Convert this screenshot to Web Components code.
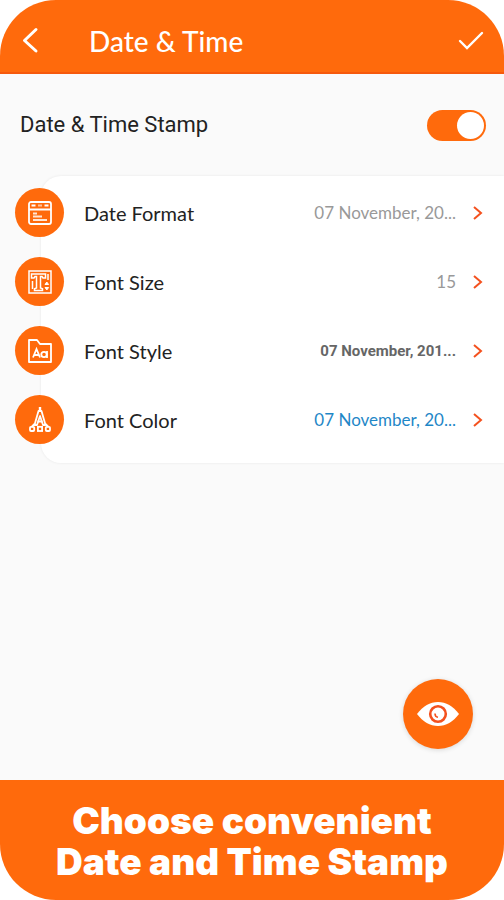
<!DOCTYPE html>
<html lang="en">
<head>
<meta charset="utf-8">
<meta name="viewport" content="width=device-width, initial-scale=1">
<title>Date &amp; Time</title>
<style>
  body {
    margin: 0;
    background: #fff;
    color: #222;
    font-family: Lato, sans-serif;
    --accent: #ff6a0c;
  }
</style>
</head>
<body>
<app-screen>
  <app-header slot="header" heading="Date &amp; Time"></app-header>
  <toggle-row label="Date &amp; Time Stamp"></toggle-row>
  <settings-card>
    <settings-row label="Date Format" value="07 November, 20...">
      <svg slot="icon" viewBox="0 0 26 26" width="26" height="26" fill="none" stroke="#fff" stroke-width="1.800">
        <rect x="2" y="2" width="22" height="22" rx="2"/>
        <path d="M2 9.500h22M4.500 5.500h4M17.500 5.500h4"/>
        <path d="M11 5.500h4" stroke="#ffc49c"/>
        <path d="M6 13.500h4M6 16.500h9M6 20h14" stroke="#ffe6d4"/>
      </svg>
    </settings-row>
    <settings-row label="Font Size" value="15">
      <svg slot="icon" viewBox="0 0 26 26" width="26" height="26" fill="none" stroke="#fff" stroke-width="1.500">
        <rect x="2" y="2" width="22" height="22"/>
        <path d="M4.500 5h14v4h-2.500l-1-1.500h-1.500V19l2 .7v1.800H7.500v-1.800l2-.7V7.500H8L7 9H4.500z"/>
        <path d="M21 5v6M5.500 12v8"/>
        <path d="M18 15.500l1.800-2.500 1.800 2.500zM18 18.500l1.800 2.500 1.800-2.500z" fill="#fff" stroke-width="1"/>
      </svg>
    </settings-row>
    <settings-row label="Font Style" value="07 November, 201..." look="bold">
      <svg slot="icon" viewBox="0 0 26 26" width="26" height="26" fill="none" stroke="#fff" stroke-width="1.800">
        <path d="M2 24V2h8l3 4h11v18z" stroke-linejoin="round"/>
        <path d="M6 19.500l3.500-8.500 3.500 8.500M7.200 17h4.600"/>
        <circle cx="17" cy="16.500" r="2.700"/>
        <path d="M20 13v7"/>
      </svg>
    </settings-row>
    <settings-row label="Font Color" value="07 November, 20..." look="blue">
      <svg slot="icon" viewBox="0 0 26 26" width="26" height="26" fill="none" stroke="#fff" stroke-width="1.800">
        <path d="M13 0v4" stroke-width="2.400"/>
        <path d="M11.500 4h3L18.500 18h-2.500L13 9 10 18H7.500z" stroke-linejoin="round"/>
        <path d="M10.500 14.500h5M7.500 17l-3 3M18.500 17l3 3"/>
        <rect x="3" y="19.800" width="4.200" height="4.200" rx="1"/>
        <rect x="10.900" y="19.800" width="4.200" height="4.200"/>
        <rect x="18.800" y="19.800" width="4.200" height="4.200" rx="1"/>
      </svg>
    </settings-row>
  </settings-card>
  <preview-button></preview-button>
  <promo-caption slot="footer">Choose convenient<br>Date and Time Stamp</promo-caption>
</app-screen>

<template id="app-screen">
  <style>
    :host {
      display: flex;
      flex-direction: column;
      min-height: 100vh;
      border-radius: 56px;
      overflow: hidden;
      background: #fafafa;
    }
    main {
      flex: 1;
      display: flex;
      flex-direction: column;
    }
  </style>
  <slot name="header"></slot>
  <main><slot></slot></main>
  <slot name="footer"></slot>
</template>

<template id="app-header">
  <style>
    :host { display: block; }
    header {
      display: flex;
      align-items: center;
      height: 72px;
      padding: 0 20px;
      background: var(--accent);
      border-bottom: 2px solid #f6590c;
      color: #fff;
    }
    h1 {
      flex: 1;
      margin: 0;
      padding: 10px 0 0 49px;
      font: 500 28px/34px Lato, sans-serif;
    }
    button {
      display: flex;
      margin: 8px 0 0;
      padding: 0;
      border: 0;
      background: none;
      color: inherit;
    }
  </style>
  <header>
    <button aria-label="Back">
      <svg width="20" height="28" viewBox="0 0 20 28" fill="none" stroke="currentColor" stroke-width="3" stroke-linecap="round" stroke-linejoin="round"><path d="M16 3.500L4.500 14.500 16 25"/></svg>
    </button>
    <h1></h1>
    <button aria-label="Done">
      <svg width="26" height="22" viewBox="0 0 26 22" fill="none" stroke="currentColor" stroke-width="2.400" stroke-linecap="round"><path d="M2 12l7 7L24 4"/></svg>
    </button>
  </header>
</template>

<template id="toggle-row">
  <style>
    :host {
      display: flex;
      align-items: center;
      justify-content: space-between;
      height: 102px;
      padding: 0 18px 0 20px;
    }
    label { font: 400 22px/28px Roboto, sans-serif; }
    input {
      appearance: none;
      display: flex;
      box-sizing: border-box;
      width: 59px;
      height: 31px;
      margin: 0;
      padding: 2px;
      border-radius: 16px;
      background: #bbb;
    }
    input::before {
      content: "";
      width: 27px;
      height: 27px;
      border-radius: 50%;
      background: #fff;
    }
    input:checked {
      justify-content: flex-end;
      background: var(--accent);
    }
  </style>
  <label for="toggle"></label>
  <input id="toggle" type="checkbox" role="switch" checked>
</template>

<template id="settings-card">
  <style>
    :host {
      display: block;
      margin-left: 41px;
      padding: 2px 0 9px;
      border-radius: 20px 0 0 20px;
      background: #fff;
      box-shadow: 0 0 3px rgba(0, 0, 0, 0.08);
    }
  </style>
  <slot></slot>
</template>

<template id="settings-row">
  <style>
    :host {
      display: block;
      /* pulls the round icon over the card's left edge */
      margin-left: -26px;
    }
    button {
      display: flex;
      align-items: center;
      width: 100%;
      height: 69px;
      padding: 0 20px 0 0;
      border: 0;
      background: none;
      color: inherit;
      text-align: left;
    }
    .icon {
      display: flex;
      align-items: center;
      justify-content: center;
      width: 49px;
      height: 49px;
      margin-right: 20px;
      border-radius: 50%;
      background: var(--accent);
    }
    .label {
      flex: 1;
      font: 400 20px/24px Lato, sans-serif;
    }
    .value {
      margin-right: 16px;
      font: 400 17px/24px Lato, sans-serif;
      color: #999;
    }
    :host([look="bold"]) .value {
      font: 700 15px/24px Roboto, sans-serif;
      color: #666;
    }
    :host([look="blue"]) .value { color: #1f87c7; }
  </style>
  <button>
    <span class="icon"><slot name="icon"></slot></span>
    <span class="label"></span>
    <span class="value"></span>
    <svg width="12" height="16" viewBox="0 0 12 16" fill="none" stroke="#f4511e" stroke-width="2"><path d="M2 2l7 6-7 6"/></svg>
  </button>
</template>

<template id="preview-button">
  <style>
    :host {
      align-self: flex-end;
      margin: auto 31px 31px 0;
    }
    button {
      display: flex;
      align-items: center;
      justify-content: center;
      width: 70px;
      height: 70px;
      padding: 0;
      border: 0;
      border-radius: 50%;
      background: var(--accent);
      box-shadow: 0 1px 5px rgba(0, 0, 0, 0.14);
    }
  </style>
  <button aria-label="Preview">
    <svg width="42" height="26" viewBox="0 0 42 26">
      <path d="M0 13C6 5 13 1 21 1s15 4 21 12c-6 8-13 12-21 12S6 21 0 13z" fill="#fff"/>
      <circle cx="21" cy="13" r="7.800" fill="#fff" stroke="#f4511e" stroke-width="2.600"/>
      <path d="M18 12.500c0 2 1 3.500 3 3.800" fill="none" stroke="#f4511e" stroke-width="1.600"/>
    </svg>
  </button>
</template>

<template id="promo-caption">
  <style>
    :host {
      display: block;
      padding: 20px 16px 18px;
      background: var(--accent);
      color: #fff;
      text-align: center;
      font: 900 37px/41px Inter, sans-serif;
    }
  </style>
  <slot></slot>
</template>

<script>
class BaseElement extends HTMLElement {
  constructor() {
    super();
    this.attachShadow({ mode: "open" });
    const template = document.getElementById(this.localName);
    this.shadowRoot.appendChild(template.content.cloneNode(true));
  }

  setText(selector, name) {
    this.shadowRoot.querySelector(selector).textContent = this.getAttribute(name);
  }
}

class AppScreen extends BaseElement {}
class SettingsCard extends BaseElement {}
class PreviewButton extends BaseElement {}
class PromoCaption extends BaseElement {}

class AppHeader extends BaseElement {
  connectedCallback() {
    this.setText("h1", "heading");
  }
}

class ToggleRow extends BaseElement {
  connectedCallback() {
    this.setText("label", "label");
  }
}

class SettingsRow extends BaseElement {
  connectedCallback() {
    this.setText(".label", "label");
    this.setText(".value", "value");
  }
}

customElements.define("app-screen", AppScreen);
customElements.define("app-header", AppHeader);
customElements.define("toggle-row", ToggleRow);
customElements.define("settings-card", SettingsCard);
customElements.define("settings-row", SettingsRow);
customElements.define("preview-button", PreviewButton);
customElements.define("promo-caption", PromoCaption);
</script>
</body>
</html>
